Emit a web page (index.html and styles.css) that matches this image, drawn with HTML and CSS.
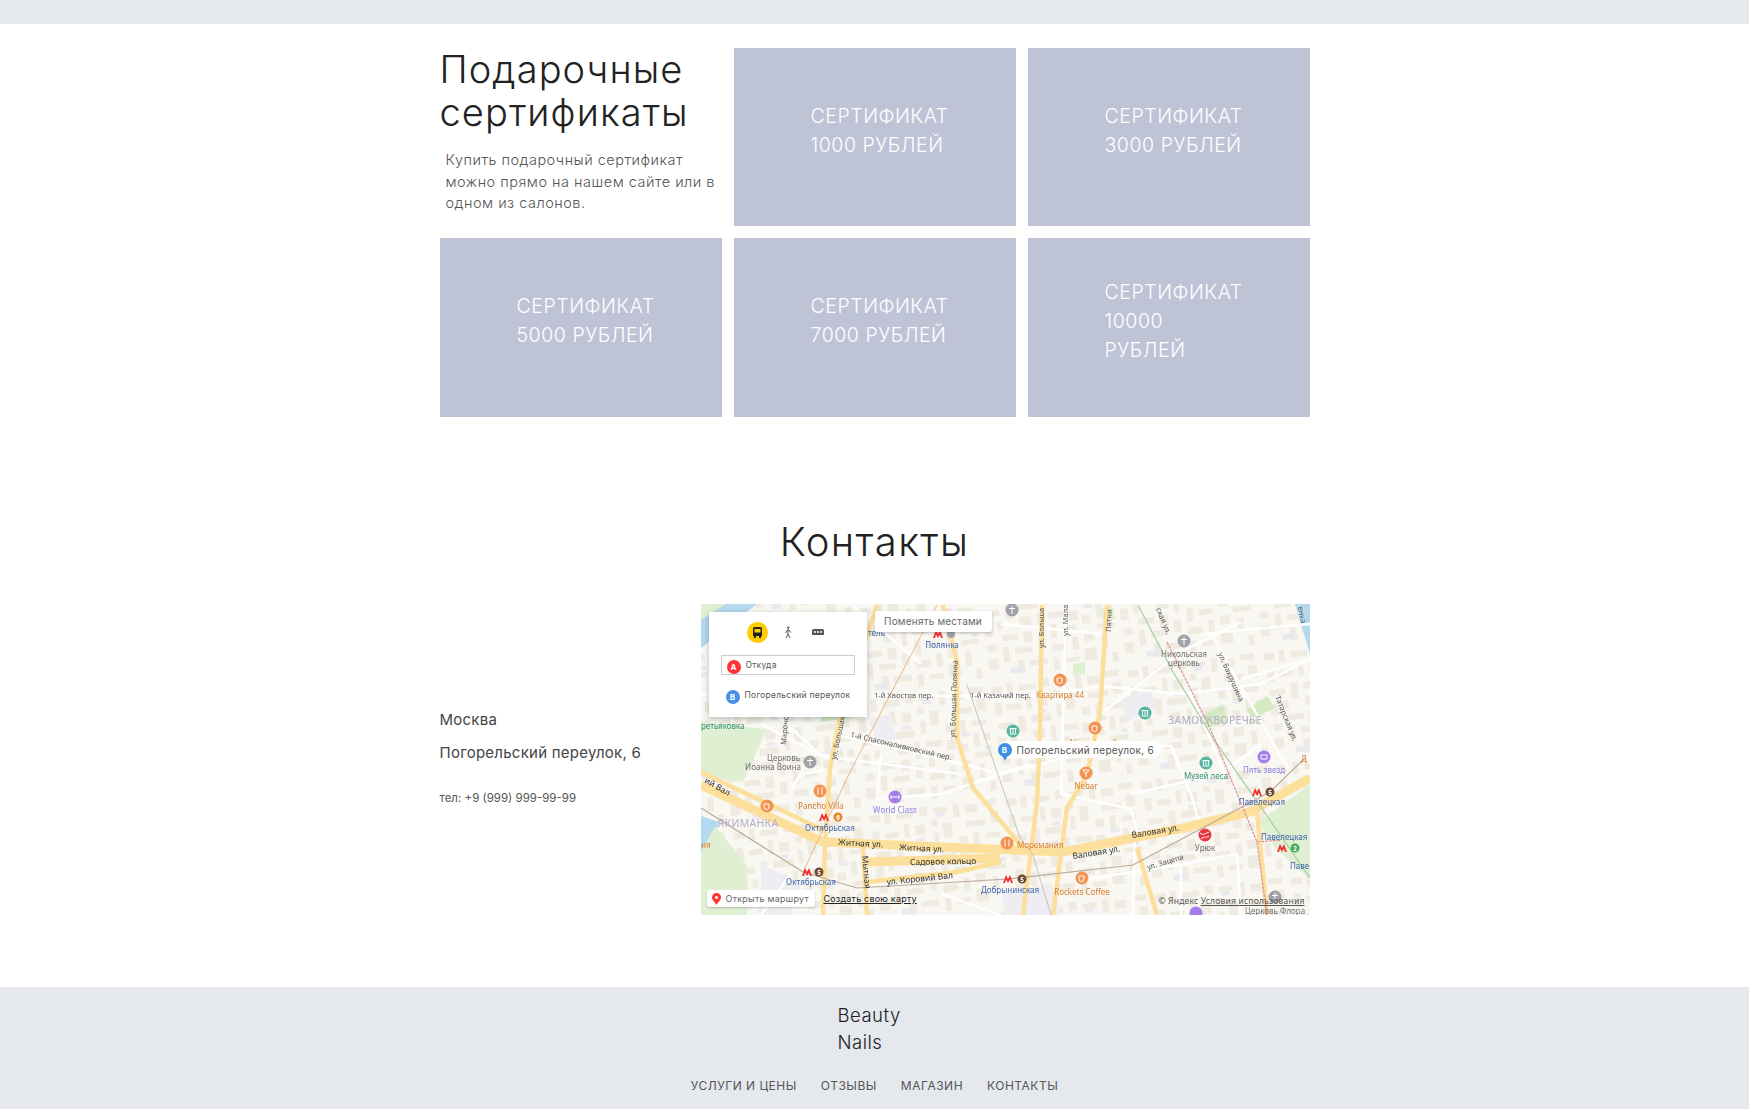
FILE: index.html
```html
<!DOCTYPE html>
<html lang="ru">
<head>
  <meta charset="UTF-8">
  <title>Beauty Nails</title>
  <link rel="stylesheet" href="styles.css">
</head>

<body>

  <div class="top-bar"></div>

  <section class="certs">
    <div class="certs-intro">
      <h2>Подарочные сертификаты</h2>
      <p>Купить подарочный сертификат можно прямо на нашем сайте или в одном из салонов.</p>
    </div>
    <a class="cert">СЕРТИФИКАТ<br>1000 РУБЛЕЙ</a>
    <a class="cert">СЕРТИФИКАТ<br>3000 РУБЛЕЙ</a>
    <a class="cert">СЕРТИФИКАТ<br>5000 РУБЛЕЙ</a>
    <a class="cert">СЕРТИФИКАТ<br>7000 РУБЛЕЙ</a>
    <a class="cert">СЕРТИФИКАТ<br>10000<br>РУБЛЕЙ</a>
  </section>

  <section class="contacts">
    <h2>Контакты</h2>
    <div class="contacts-row">
      <div class="address">
        <p>Москва</p>
        <p>Погорельский переулок, 6</p>
        <p class="phone">тел: +9 (999) 999-99-99</p>
      </div>

      <div class="map">
        <svg class="map-canvas" viewBox="0 0 609 311" width="609" height="311">
          <defs>
            <pattern id="blocks" width="137" height="113" patternUnits="userSpaceOnUse" patternTransform="rotate(-7)">
              <path class="block" d="M4 5h11v7h-11zM19 3h6v12h-6zM31 6h17v6h-17zM54 2h8v9h-8zM68 5h14v5h-14zM88 3h6v14h-6zM100 6h12v8h-12zM118 3h14v6h-14zM5 21h7v13h-7zM17 24h14v6h-14zM37 17h5v14h-5zM48 20h10v10h-10zM65 16h6v7h-6zM76 21h9v15h-9zM99 22h20v6h-20zM124 15h9v12h-9zM6 42h15v6h-15zM27 37h7v16h-7zM40 38h20v7h-20zM66 30h5v13h-5zM91 36h8v8h-8zM105 34h6v16h-6zM117 36h15v5h-15zM4 56h8v12h-8zM17 54h6v8h-6zM40 52h12v9h-12zM58 50h5v17h-5zM69 51h17v6h-17zM90 52h9v10h-9zM117 48h6v14h-6zM127 50h7v7h-7zM21 68h16v6h-16zM42 67h9v11h-9zM70 63h6v14h-6zM82 66h13v6h-13zM102 58h9v8h-9zM116 68h18v5h-18zM5 76h9v7h-9zM20 80h6v15h-6zM32 82h17v6h-17zM56 74h7v12h-7zM69 83h15v7h-15zM90 78h6v13h-6zM102 75h10v9h-10zM119 80h6v14h-6zM4 90h10v11h-10zM33 94h7v14h-7zM45 96h18v6h-18zM69 96h6v13h-6zM81 98h14v5h-14zM101 91h12v12h-12zM128 98h6v10h-6z"/>
              <path class="block-lilac" d="M70 9h9v5h-9zM106 47h8v4h-8zM25 101h12v6h-12zM128 62h6v4h-6zM48 33h8v4h-8z"/>
            </pattern>
          </defs>

          <rect class="land" width="609" height="311"/>
          <rect fill="url(#blocks)" width="609" height="311"/>

          <!-- water and parks -->
          <path class="water" d="M0 0H56L0 44z"/>
          <path class="water" d="M594 0H609V50z"/>
          <path class="park" d="M0 118L66 125L42 178L0 172z"/>
          <path class="water" d="M0 212L18 218L10 244L0 248z"/>
          <path class="park" d="M0 248L14 222L46 262L46 311H0z"/>
          <path class="park" d="M558 218L609 180V275L575 245z"/>
          <path class="park" d="M0 0H25L0 16z"/>
          <path class="park-light" d="M502 111L522 100L526 118L506 124zM545 106L566 92L574 104L552 114z"/>
          <path class="park-light" d="M120 95L160 95L160 112L120 118z"/>
          <path class="park" d="M372 60L384 58L384 70L372 72zM400 5L412 3L414 15L402 17z"/>
          <path class="lilac-patch" d="M420 95L450 85L455 105L425 118zM300 290L350 280L360 311H305zM170 115L190 110L195 135L175 140zM60 260L100 280L90 311H60z"/>

          <!-- small streets -->
          <g class="street">
            <path d="M0 90L60 96L120 152L260 170"/>
            <path d="M170 92H340L400 82L480 90L560 80L609 55"/>
            <path d="M140 132L230 152L300 170L420 140L470 142L490 190L500 226"/>
            <path d="M60 120L120 152"/>
            <path d="M180 150L176 195L240 190L330 160"/>
            <path d="M90 185L100 170L130 165"/>
            <path d="M400 110L480 48L540 18"/>
            <path d="M490 90L524 170M510 30L590 170"/>
            <path d="M365 1L360 190L430 205L440 240"/>
            <path d="M430 190L520 170L560 140"/>
            <path d="M380 276L470 262L536 250L540 311"/>
            <path d="M300 20L400 30M220 60L150 0"/>
            <path d="M500 30L609 20M540 75L609 55"/>
            <path d="M434 230L432 311M480 262V311"/>
            <path d="M240 290L300 311M60 311L90 270"/>
          </g>

          <!-- main roads -->
          <g class="road">
            <path class="road-wide" d="M0 181L122 238L362 248L482 224L549 208L609 174"/>
            <path class="road-wide" d="M166 258L299 254"/>
            <path d="M0 168L122 226"/>
            <path d="M176 1L139 114L129 164L124 241L122 311"/>
            <path d="M242 1L256 58L256 134L272 184L322 244"/>
            <path d="M406 1L399 108L386 171L366 204L352 311"/>
            <path d="M341 1L339 124L336 198L322 311"/>
            <path d="M162 244L166 311"/>
            <path d="M166 278L256 268L300 258"/>
            <path d="M436 244L456 311"/>
            <path d="M556 208L566 311"/>
          </g>

          <!-- rail and metro lines -->
          <path class="line-orange" d="M236 1L149 168L102 268"/>
          <path class="line-gray" d="M266 81L319 234L332 251L350 311"/>
          <path class="line-brown" d="M0 204L102 268L156 284L307 275L432 261L539 204L569 188L604 154"/>
          <path class="line-green" d="M437 1L472 68L512 134L609 274"/>
          <path class="line-pink" d="M466 38L509 124L556 238L566 311M556 238L580 236"/>

          <!-- street names -->
          <g class="label-street">
            <text x="173" y="94">1-й Хвостов пер.</text>
            <text x="269" y="94">1-й Казачий пер.</text>
            <text x="149" y="133" transform="rotate(13 149 133)">1-й Спасоналивковский пер.</text>
            <text x="254" y="134" transform="rotate(-88 254 134)">ул. Большая Полянка</text>
            <text x="85" y="141" transform="rotate(-85 85 141)">Мароно</text>
            <text x="135" y="156" transform="rotate(-78 135 156)">ул. Большая</text>
            <text x="343" y="44" transform="rotate(-90 343 44)">ул. Больша</text>
            <text x="367" y="32" transform="rotate(-90 367 32)">ул. Мала</text>
            <text x="410" y="28" transform="rotate(-88 410 28)">Пятни</text>
            <text x="455" y="5" transform="rotate(68 455 5)">ская ул.</text>
            <text x="517" y="50" transform="rotate(66 517 50)">ул. Бахрушина</text>
            <text x="574" y="93" transform="rotate(68 574 93)">Татарская ул.</text>
            <text x="447" y="266" transform="rotate(-17 447 266)">ул. Зацепа</text>
            <text x="597" y="3" transform="rotate(80 597 3)">енка</text>
          </g>
          <g class="label-road">
            <text x="3" y="178" transform="rotate(30 3 178)">ий Вал</text>
            <text x="137" y="241" transform="rotate(3 137 241)">Житная ул.</text>
            <text x="198" y="246" transform="rotate(3 198 246)">Житная ул.</text>
            <text x="209" y="261" transform="rotate(-1 209 261)">Садовое кольцо</text>
            <text x="186" y="281" transform="rotate(-6 186 281)">ул. Коровий Вал</text>
            <text x="161" y="252" transform="rotate(85 161 252)">Мытная</text>
            <text x="372" y="255" transform="rotate(-9 372 255)">Валовая ул.</text>
            <text x="431" y="234" transform="rotate(-9 431 234)">Валовая ул.</text>
          </g>

          <!-- districts -->
          <text class="label-district" x="47" y="223" text-anchor="middle">ЯКИМАНКА</text>
          <text class="label-district" x="514" y="120" text-anchor="middle">ЗАМОСКВОРЕЧЬЕ</text>

          <!-- places -->
          <g class="label-place label-gray">
            <text x="99" y="157" text-anchor="end">Церковь</text>
            <text x="100" y="166" text-anchor="end">Иоанна Воина</text>
            <text x="483" y="53" text-anchor="middle">Никольская</text>
            <text x="483" y="62" text-anchor="middle">церковь</text>
            <text x="504" y="247" text-anchor="middle">Урюк</text>
            <text x="544" y="310">Церковь Флора</text>
          </g>
          <g class="label-place label-orange">
            <text x="120" y="205" text-anchor="middle">Pancho Villa</text>
            <text x="359" y="94" text-anchor="middle">Квартира 44</text>
            <text x="394" y="142" text-anchor="middle">Nicepricecafe</text>
            <text x="385" y="185" text-anchor="middle">Nebar</text>
            <text x="316" y="244">Моремания</text>
            <text x="381" y="291" text-anchor="middle">Rockets Coffee</text>
            <text x="600" y="158">Д</text>
            <text x="0" y="244">ня</text>
          </g>
          <g class="label-place label-purple">
            <text x="194" y="209" text-anchor="middle">World Class</text>
            <text x="563" y="169" text-anchor="middle">Пять звезд</text>
          </g>
          <g class="label-place label-green">
            <text x="0" y="125">ретьяковка</text>
            <text x="505" y="175" text-anchor="middle">Музей леса</text>
          </g>
          <g class="label-place label-blue">
            <text x="241" y="44" text-anchor="middle">Полянка</text>
            <text x="184" y="32" text-anchor="end">тель</text>
            <text x="129" y="227" text-anchor="middle">Октябрьская</text>
            <text x="110" y="281" text-anchor="middle">Октябрьская</text>
            <text x="280" y="289">Добрынинская</text>
            <text x="561" y="201" text-anchor="middle">Павелецкая</text>
            <text x="560" y="236">Павелецкая</text>
            <text x="589" y="265">Паве</text>
          </g>

          <!-- point icons -->
          <g class="poi poi-orange">
            <circle cx="119" cy="187" r="6.5"/><path d="M117 183.500v7M121 183.500v7"/>
            <circle cx="66" cy="202" r="6.5"/><path d="M63 200h5v3a2 2 0 0 1-5 0z"/>
            <circle cx="359" cy="76" r="6.5"/><path d="M356 74h5v3a2 2 0 0 1-5 0z"/>
            <circle cx="394" cy="124" r="6.500"/><path d="M391 122h5v3a2 2 0 0 1-5 0z"/>
            <circle cx="385" cy="169" r="6.5"/><path d="M382 166h6l-3 4zM385 170v3"/>
            <circle cx="306" cy="239" r="6.5"/><path d="M304 235.500v7M308 235.500v7"/>
            <circle cx="381" cy="274" r="6.5"/><path d="M378 272h5v3a2 2 0 0 1-5 0z"/>
          </g>
          <g class="poi poi-gray">
            <circle cx="109" cy="158" r="6.500"/><path d="M109 154v8M106 156.500h6"/>
            <circle cx="311" cy="6" r="6.500"/><path d="M311 2v8M308 4.500h6"/>
            <circle cx="483" cy="37" r="6.500"/><path d="M483 33v8M480 35.500h6"/>
            <circle cx="574" cy="293" r="6.500"/><path d="M574 289v8M571 291.500h6"/>
            <circle cx="250" cy="30" r="4"/>
          </g>
          <g class="poi poi-green">
            <circle cx="312" cy="127" r="6.500"/><path d="M308.500 130h7M309.500 125v4M312 125v4M314.500 125v4M308.500 124.500h7"/>
            <circle cx="444" cy="109" r="6.500"/><path d="M440.500 112h7M441.500 107v4M444 107v4M446.500 107v4M440.500 106.500h7"/>
            <circle cx="505" cy="159" r="6.500"/><path d="M501.500 162h7M502.500 157v4M505 157v4M507.500 157v4M501.500 156.500h7"/>
          </g>
          <g class="poi poi-purple">
            <circle cx="194" cy="193" r="6.500"/><path d="M190 193h8M190 191v4M198 191v4"/>
            <circle cx="563" cy="153" r="6.500"/><path d="M560 151h6v4h-6z"/>
            <circle cx="495" cy="309" r="6.500"/>
          </g>
          <circle class="poi-red" cx="504" cy="231" r="6.500"/>
          <path class="poi-red-mark" d="M499 229c3 3 6 0 9-1M500 235c3-3 6-1 8-3"/>

          <!-- metro -->
          <g class="metro">
            <path d="M232 34L235 26L237 30L239 26L242 34H240L239 30.500L237 34L235 30.500L234 34z"/>
            <path d="M118 217L121 209L123 213L125 209L128 217H126L125 213.500L123 217L121 213.500L120 217z"/>
            <path d="M101 272L104 264L106 268L108 264L111 272H109L108 268.500L106 272L104 268.500L103 272z"/>
            <path d="M302 279L305 271L307 275L309 271L312 279H310L309 275.500L307 279L305 275.500L304 279z"/>
            <path d="M551 192L554 184L556 188L558 184L561 192H559L558 188.500L556 192L554 188.500L553 192z"/>
            <path d="M576 248L579 240L581 244L583 240L586 248H584L583 244.500L581 248L579 244.500L578 248z"/>
          </g>
          <g class="metro-num">
            <circle class="num-orange" cx="137" cy="213" r="4.500"/><text x="137" y="215.500">6</text>
            <circle class="num-brown" cx="118" cy="268" r="4.500"/><text x="118" y="270.500">5</text>
            <circle class="num-brown" cx="321" cy="275" r="4.500"/><text x="321" y="277.500">5</text>
            <circle class="num-brown" cx="569" cy="188" r="4.500"/><text x="569" y="190.500">5</text>
            <circle class="num-green" cx="594" cy="244" r="4.500"/><text x="594" y="246.500">2</text>
          </g>
        </svg>

        <div class="route-card">
          <div class="route-modes">
            <span class="mode mode-active">
              <svg width="13" height="13" viewBox="0 0 13 13"><path d="M2 2.500Q2 1 4 1H9Q11 1 11 2.500V10H2zM3.500 3V6.500H9.500V3z" fill="#222" fill-rule="evenodd"/><path d="M3 10h2v2H3zM8 10h2v2H8z" fill="#222"/></svg>
            </span>
            <span class="mode">
              <svg width="10" height="13" viewBox="0 0 10 13"><circle cx="5.200" cy="1.600" r="1.200" fill="#555"/><path d="M5 3.500V8L3 12M5 8L7 12M2.500 7L4.500 4H6L8 6.500" fill="none" stroke="#555" stroke-width="1"/></svg>
            </span>
            <span class="mode">
              <svg width="12" height="9" viewBox="0 0 12 9"><path d="M1.500 1H10.500Q12 1 12 3V7H0V3Q0 1 1.500 1z" fill="#555"/><path d="M2 4h2M5 4h2M8 4h2" stroke="#fff" stroke-width="1.500"/></svg>
            </span>
          </div>
          <div class="route-field route-from"><span class="point point-a">A</span>Откуда</div>
          <div class="route-field"><span class="point point-b">B</span>Погорельский переулок</div>
        </div>

        <div class="swap-btn">Поменять местами</div>

        <div class="dest-label">
          <span class="dest-pin">B</span>
          <span>Погорельский переулок, 6</span>
        </div>

        <div class="open-route">
          <svg width="9" height="12" viewBox="0 0 9 12"><path d="M4.500 0A4.500 4.500 0 0 1 9 4.500C9 7.500 5.500 9.500 4.500 12C3.500 9.500 0 7.500 0 4.500A4.500 4.500 0 0 1 4.500 0zM4.500 3A1.500 1.500 0 1 0 4.500 6A1.500 1.500 0 1 0 4.500 3z" fill="#f33" fill-rule="evenodd"/></svg>
          Открыть маршрут
        </div>
        <a class="make-map">Создать свою карту</a>
        <div class="copyright">© Яндекс <a>Условия использования</a></div>
      </div>
    </div>
  </section>

  <footer>
    <div class="logo">Beauty<br>Nails</div>
    <nav>
      <a>УСЛУГИ И ЦЕНЫ</a>
      <a>ОТЗЫВЫ</a>
      <a>МАГАЗИН</a>
      <a>КОНТАКТЫ</a>
    </nav>
  </footer>

</body>
</html>
```

FILE: styles.css
```css
body {
  margin: 0;
  font-family: Inter, "Open Sans", sans-serif;
  color: #2a2a2a;
  background: #fff;
}

h2, p {
  margin: 0;
  font-weight: 300;
}

.top-bar {
  height: 24px;
  background: #e5e8ed;
}

/* certificates */
.certs {
  display: grid;
  grid-template-columns: repeat(3, 282px);
  grid-template-rows: 178px 179px;
  gap: 12px;
  width: 870px;
  margin: 24px auto 0;
}

.certs-intro h2 {
  font-size: 38px;
  line-height: 43px;
  letter-spacing: 1.1px;
  color: #222;
}

.certs-intro p {
  width: 276px;
  margin: 15px 0 0 6px;
  font-size: 14.5px;
  line-height: 21.5px;
  letter-spacing: 0.5px;
  color: #555;
}

.cert {
  display: flex;
  align-items: center;
  padding: 0 0 13px 77px;
  background: #bec4d6;
  color: #fff;
  font-size: 19.500px;
  font-weight: 300;
  line-height: 29px;
  letter-spacing: 0.55px;
}

/* contacts */
.contacts {
  width: 870px;
  margin: 0 auto;
}

.contacts h2 {
  margin-top: 102px;
  font-size: 40px;
  line-height: 46px;
  letter-spacing: 1.4px;
  text-align: center;
  color: #222;
}

.contacts-row {
  display: flex;
  align-items: center;
  justify-content: space-between;
  margin-top: 39px;
}

.address {
  padding-bottom: 3px;
}

.address p {
  margin-bottom: 14px;
  font-size: 15px;
  line-height: 19px;
  font-weight: 400;
  letter-spacing: 0.25px;
  color: #444;
}

.address .phone {
  margin: 28px 0 0;
  font-size: 11.500px;
  line-height: 16px;
  letter-spacing: 0;
  color: #555;
}

.map {
  position: relative;
  width: 609px;
  height: 311px;
  overflow: hidden;
  font-family: "Noto Sans", sans-serif;
}

.map-canvas {
  display: block;
  filter: blur(0.35px);
}

.land { fill: #f9f7f2; }
.block { fill: #efebe1; }
.block-lilac { fill: #ebe9f0; }
.lilac-patch { fill: #eeedf2; }
.water { fill: #b3d9ee; }
.park { fill: #deefd2; }
.park-light { fill: #d3eac3; }

.street path {
  fill: none;
  stroke: #fff;
  stroke-width: 2.5;
}

.road path {
  fill: none;
  stroke: #fcdf9a;
  stroke-width: 4.5;
}

.road .road-wide { stroke-width: 9; }

.line-orange, .line-gray, .line-brown, .line-green, .line-pink {
  fill: none;
}

.line-orange { stroke: #eab98a; stroke-width: 1; }
.line-gray { stroke: #c4c4c4; stroke-width: 1; }
.line-brown { stroke: #bda999; stroke-width: 1.2; }
.line-green { stroke: #a7cda0; stroke-width: 1.2; }
.line-pink { stroke: #dc8fa0; stroke-width: 1.2; stroke-dasharray: 3 1; }

.label-street text { font-size: 7.500px; fill: #555; }
.label-road text { font-size: 8.500px; fill: #333; }
.label-district { font-size: 10.500px; fill: #b0aec8; letter-spacing: 0.3px; }
.label-place text { font-size: 8px; }
.label-gray text { fill: #6f6f6f; }
.label-orange text { fill: #d97c30; }
.label-purple text { fill: #8d80e6; }
.label-green text { fill: #34927c; }
.label-blue text { fill: #3e65ae; }

.poi path { fill: none; stroke: #fff; stroke-width: 1; }
.poi-orange circle { fill: #f39251; }
.poi-gray circle { fill: #9fa3a8; }
.poi-green circle { fill: #55b79f; }
.poi-purple circle { fill: #a57de8; }
.poi-red { fill: #e8383d; }
.poi-red-mark { fill: none; stroke: #fff; stroke-width: 1; }

.metro path { fill: #f03030; }

.metro-num text {
  font-size: 6.500px;
  font-weight: 700;
  fill: #fff;
  text-anchor: middle;
}

.num-orange { fill: #e9862c; }
.num-brown { fill: #6f4a33; }
.num-green { fill: #3fae50; }

/* map controls */
.route-card {
  position: absolute;
  left: 8px;
  top: 8px;
  width: 158px;
  height: 105px;
  box-sizing: border-box;
  padding: 10px 12px 0;
  background: #fff;
  box-shadow: 0 2px 6px rgba(0, 0, 0, 0.25);
  font-family: Inter, sans-serif;
  font-size: 8.500px;
  letter-spacing: 0.25px;
  color: #555;
}

.route-modes {
  display: flex;
  justify-content: center;
  gap: 9px;
  margin: 0 0 12px 0;
}

.mode {
  display: flex;
  align-items: center;
  justify-content: center;
  width: 21px;
  height: 21px;
  border-radius: 50%;
}

.mode-active {
  background: #fc0;
}

.route-field {
  display: flex;
  align-items: center;
  gap: 5px;
  height: 20px;
  padding-left: 5px;
  white-space: nowrap;
}

.route-from {
  width: 134px;
  box-sizing: border-box;
  margin-bottom: 10px;
  border: 1px solid #ccc;
}

.point {
  display: flex;
  align-items: center;
  justify-content: center;
  width: 14px;
  height: 14px;
  border-radius: 50%;
  color: #fff;
  font-size: 8px;
  font-weight: 700;
}

.point-a { background: #f33; margin-top: 3px; }
.point-b { background: #4a90e8; margin-top: 3px; }

.swap-btn {
  position: absolute;
  left: 174px;
  top: 7px;
  width: 117px;
  height: 21px;
  border-radius: 2px;
  background: #fff;
  box-shadow: 0 1px 3px rgba(0, 0, 0, 0.25);
  font-family: Inter, sans-serif;
  font-size: 10px;
  line-height: 21px;
  letter-spacing: 0.2px;
  text-align: center;
  color: #666;
}

.dest-label {
  position: absolute;
  left: 297px;
  top: 137px;
  display: flex;
  align-items: center;
  gap: 5px;
  height: 17px;
  padding-right: 8px;
  border-radius: 9px;
  background: rgba(255, 255, 255, 0.95);
  font-family: Inter, sans-serif;
  font-size: 10px;
  letter-spacing: 0.3px;
  color: #555;
  white-space: nowrap;
}

.dest-pin {
  position: relative;
  display: flex;
  align-items: center;
  justify-content: center;
  width: 14px;
  height: 14px;
  border-radius: 50%;
  background: #3d8fe6;
  color: #fff;
  font-size: 8px;
  font-weight: 700;
}

.dest-pin::after {
  content: '';
  position: absolute;
  top: 12px;
  left: 4px;
  border-top: 6px solid #3d8fe6;
  border-left: 3px solid transparent;
  border-right: 3px solid transparent;
}

.open-route {
  position: absolute;
  left: 6px;
  top: 286px;
  display: flex;
  align-items: center;
  gap: 5px;
  width: 108px;
  height: 17px;
  box-sizing: border-box;
  padding-left: 5px;
  border-radius: 2px;
  background: #fff;
  box-shadow: 0 1px 2px rgba(0, 0, 0, 0.2);
  font-family: Inter, sans-serif;
  font-size: 9px;
  letter-spacing: 0.25px;
  color: #666;
  white-space: nowrap;
}

.make-map {
  position: absolute;
  left: 123px;
  top: 289px;
  font-family: Inter, sans-serif;
  font-size: 9px;
  line-height: 12px;
  letter-spacing: 0.2px;
  color: #222;
  text-decoration: underline;
}

.copyright {
  position: absolute;
  right: 5px;
  top: 292px;
  font-size: 8.500px;
  line-height: 10px;
  letter-spacing: 0.2px;
  color: #555;
}

.copyright a {
  text-decoration: underline;
}

/* footer */
footer {
  margin-top: 72px;
  height: 122px;
  box-sizing: border-box;
  padding-top: 15px;
  background: #e5e8ed;
}

.logo {
  width: 74px;
  margin: 0 auto;
  font-size: 18.500px;
  line-height: 27px;
  font-weight: 300;
  letter-spacing: 0.5px;
  color: #222;
}

nav {
  display: flex;
  justify-content: center;
  gap: 24px;
  margin-top: 22px;
  font-size: 12px;
  line-height: 16px;
  letter-spacing: 0.5px;
  color: #555;
}
```
